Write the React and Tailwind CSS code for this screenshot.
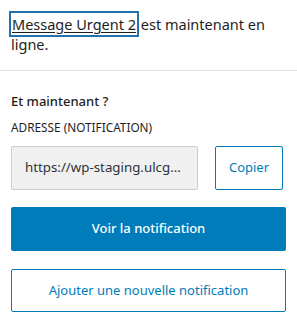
export default function App() {
  return (
    <div
      className="w-[297px] h-[326px] bg-white text-[13px] text-[#1e1e1e] overflow-hidden"
      style={{ fontFamily: '"Noto Sans", "Open Sans", sans-serif' }}
    >
      <div className="px-[11px] pt-[14px] h-[71px] border-b border-[#e0e0e0]">
        <p className="text-[14.5px] leading-[20px]">
          <a
            href="#"
            className="text-[#1e1e1e] underline underline-offset-[2px] outline-2 outline-[#2271b1] px-[1px] py-[1px]"
          >
            Message Urgent 2
          </a>{' '}
          est maintenant en ligne.
        </p>
      </div>

      <div className="px-[11px] pt-[22px]">
        <p className="font-medium leading-[16px]">Et maintenant ?</p>
        <p className="mt-[11px] text-[11.8px] uppercase leading-[14px]">Adresse (notification)</p>

        <div className="mt-[12px] flex gap-[17px]">
          <div className="w-[187px] h-[44px] flex items-center px-[13px] bg-[#f0f0f0] border border-[#cccccc] rounded-[2px] text-[13.3px] text-[#2c3338]">
            <span className="whitespace-nowrap">https://wp-staging.ulcg…</span>
          </div>
          <button className="w-[68px] h-[44px] border border-[#007cba] rounded-[2px] text-[#007cba]">
            Copier
          </button>
        </div>

        <button className="mt-[17px] w-full h-[44px] bg-[#007cba] rounded-[2px] text-white font-medium">
          Voir la notification
        </button>

        <button className="mt-[18px] w-full h-[43px] border border-[#007cba] rounded-[2px] text-[#007cba]">
          Ajouter une nouvelle notification
        </button>
      </div>
    </div>
  );
}
